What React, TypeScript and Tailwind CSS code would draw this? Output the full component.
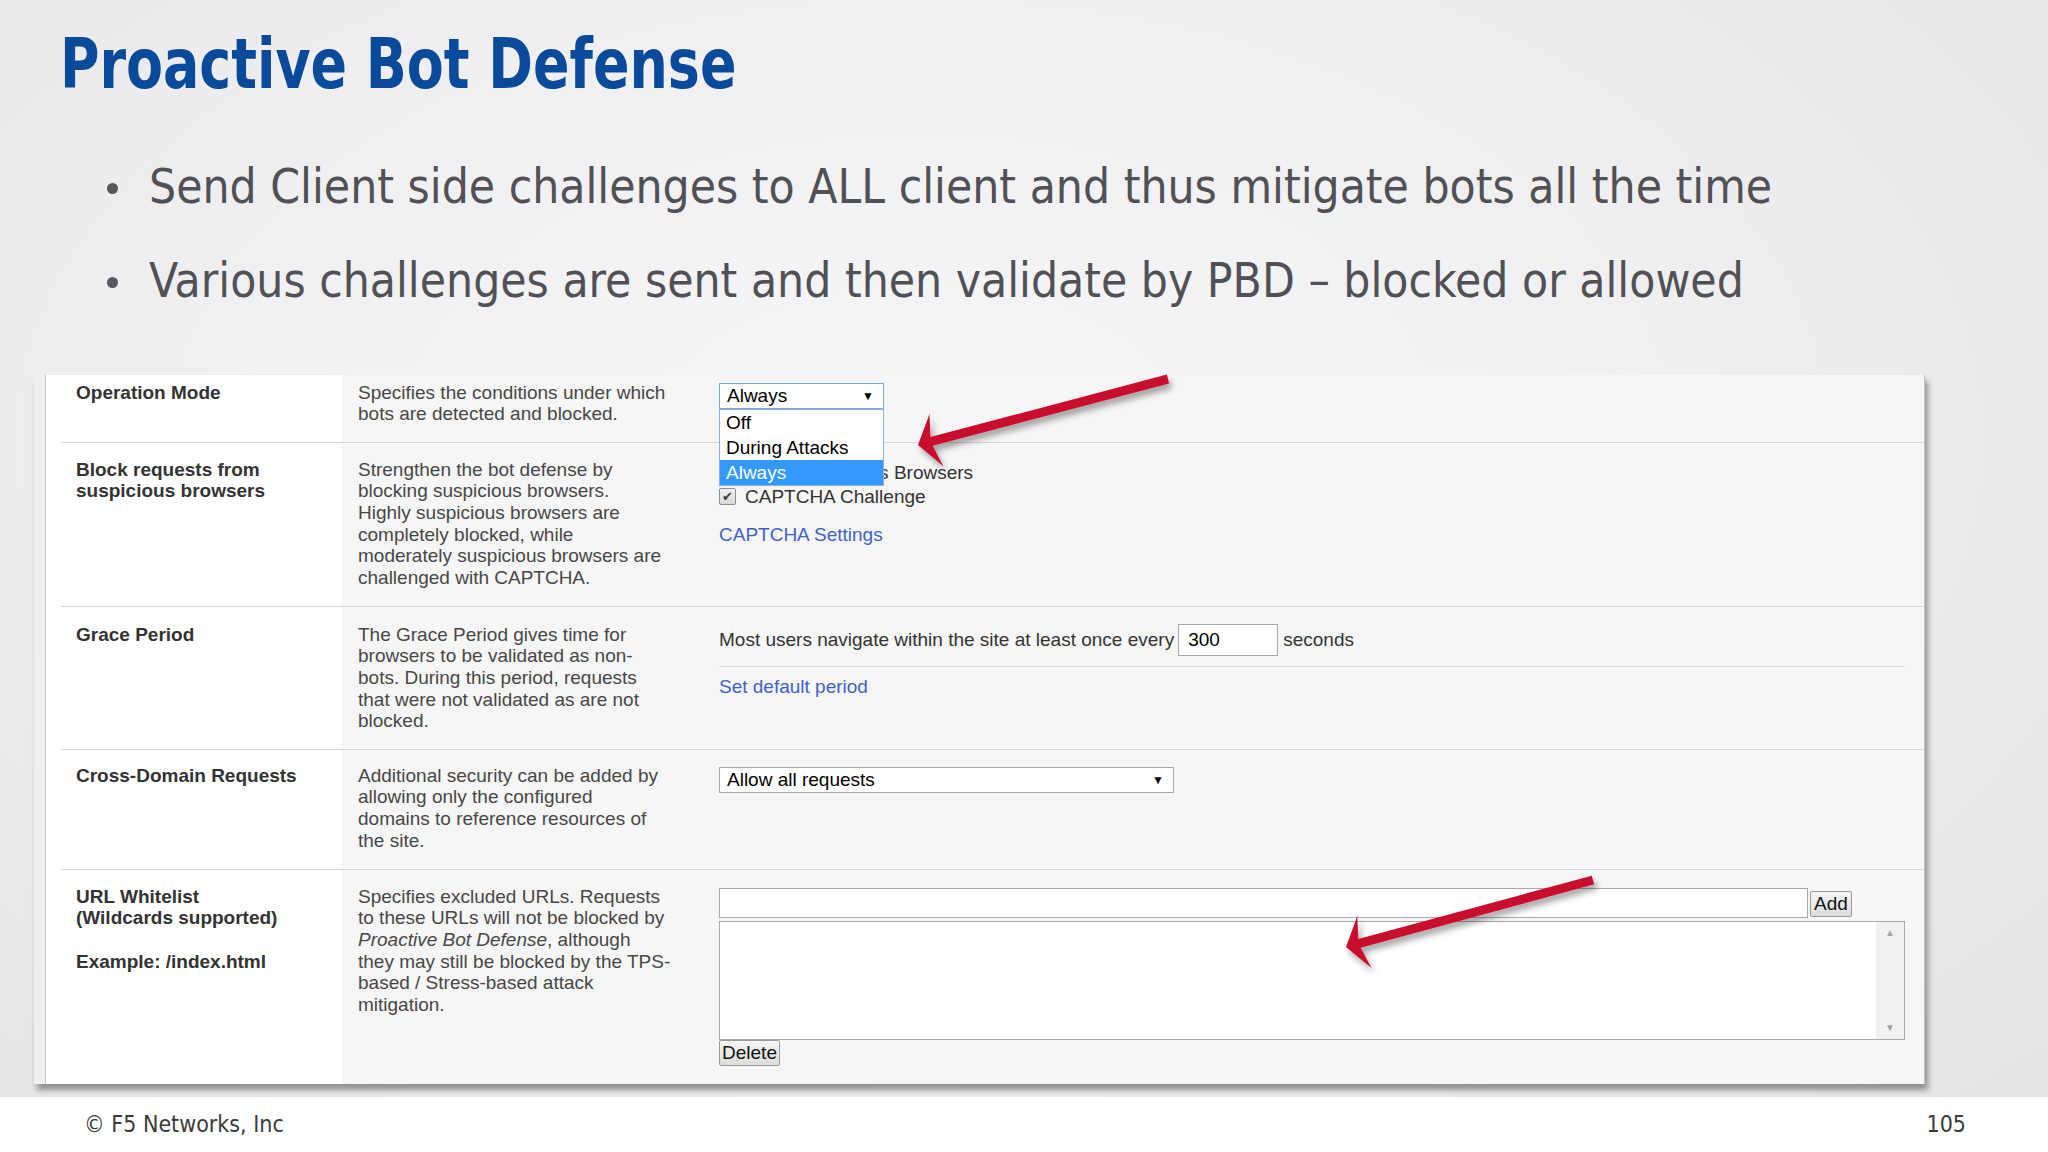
import React from "react";

const NARROW =
  "[font-family:'DejaVu_Sans_Condensed','Liberation_Sans_Narrow','Liberation_Sans',sans-serif]";
const ARIAL = "[font-family:'Liberation_Sans',Arial,sans-serif]";

function arrowPoints(tx: number, ty: number, px: number, py: number): string {
  const shaft = 9;
  const headLen = 19;
  const headW = 27;
  const notch = 14;
  const dx = px - tx;
  const dy = py - ty;
  const len = Math.hypot(dx, dy);
  const ux = dx / len;
  const uy = dy / len;
  const nx = -uy;
  const ny = ux;
  const pt = (a: number, b: number) => [px - ux * a + nx * b, py - uy * a + ny * b];
  const pts = [
    pt(0, 0),
    pt(headLen, headW),
    pt(notch, shaft / 2),
    [tx + nx * (shaft / 2), ty + ny * (shaft / 2)],
    [tx - nx * (shaft / 2), ty - ny * (shaft / 2)],
    pt(notch, -shaft / 2),
    pt(headLen, -headW),
  ];
  return pts.map((p) => `${p[0].toFixed(1)},${p[1].toFixed(1)}`).join(" ");
}

function Checkbox() {
  return (
    <span className="w-[17px] h-[17px] border border-[#8e8e8e] rounded-[2px] bg-gradient-to-b from-[#f0f0f0] to-[#d9d9d9] flex items-center justify-center text-[13px] leading-none text-[#3a3a3a]">
      ✔
    </span>
  );
}

type RowProps = {
  h: string;
  pt: string;
  label: React.ReactNode;
  desc: React.ReactNode;
  children: React.ReactNode;
  last?: boolean;
};

function Row({ h, pt, label, desc, children, last }: RowProps) {
  return (
    <div className={`flex box-border ${h} ${last ? "" : "border-b border-[#d6d4d4]"}`}>
      <div className={`w-[281px] bg-white pl-[15px] ${pt} text-[19px] leading-[21.7px] font-bold text-[#333333] whitespace-nowrap`}>
        {label}
      </div>
      <div className={`w-[362px] bg-[#f7f6f6] pl-[16px] ${pt} text-[19px] leading-[21.7px] text-[#474747] whitespace-nowrap`}>
        {desc}
      </div>
      <div className="flex-1 bg-[#f7f6f6] pl-[15px] relative text-[19px] text-[#333333]">{children}</div>
    </div>
  );
}

export default function App() {
  return (
    <div className={`relative w-[2048px] h-[1152px] overflow-hidden flex flex-col bg-white ${ARIAL}`}>
      <div className="h-[1097px] flex flex-col bg-[radial-gradient(ellipse_at_45%_40%,#f6f6f8_0%,#f0f0f2_45%,#e4e4e7_100%)]">
        <h1
          className={`${NARROW} ml-[60px] mt-[29px] text-[70px] leading-none font-bold text-[#0a4a9a] whitespace-nowrap origin-left scale-x-[0.855]`}
        >
          Proactive Bot Defense
        </h1>
        <ul className={`${NARROW} ml-[107px] mt-[64px] flex flex-col gap-[46.5px] text-[47.5px] leading-none text-[#505055]`}>
          <li className="flex items-center h-[47.5px] whitespace-nowrap">
            <span className="w-[11px] h-[11px] rounded-full bg-[#58585c] mr-[31px] mt-[4px]" />
            Send Client side challenges to ALL client and thus mitigate bots all the time
          </li>
          <li className="flex items-center h-[47.5px] whitespace-nowrap">
            <span className="w-[11px] h-[11px] rounded-full bg-[#58585c] mr-[31px] mt-[4px]" />
            Various challenges are sent and then validate by PBD – blocked or allowed
          </li>
        </ul>

        <div className="ml-[34px] mt-[70px] w-[1891px] h-[709px] flex bg-[#f7f6f6] border-r border-[#c4c4c4] shadow-[3px_6px_6px_rgba(0,0,0,0.38)]">
          <div className="w-[12px] bg-[#efefef] border-r border-[#c3c3c3]" />
          <div className="flex-1 flex flex-col bg-white pl-[15px]">
            <Row
              h="h-[68px]"
              pt="pt-[7px]"
              label="Operation Mode"
              desc={
                <>
                  Specifies the conditions under which
                  <br />
                  bots are detected and blocked.
                </>
              }
            >
              <div className="pt-[8px]">
                <div className="w-[165px] h-[26px] border border-[#7aa7dc] bg-white flex items-center justify-between pl-[7px] pr-[9px] text-black">
                  <span className="leading-none">Always</span>
                  <span className="text-[12px] leading-none">▼</span>
                </div>
              </div>
              <div className="absolute left-[15px] top-[34px] w-[165px] z-10 bg-white border border-[#8fb0d8] flex flex-col text-black">
                <div className="h-[25px] pl-[6px] flex items-center leading-none">Off</div>
                <div className="h-[25px] pl-[6px] flex items-center leading-none">During Attacks</div>
                <div className="h-[25px] pl-[6px] flex items-center leading-none bg-[#3399ff] text-white">Always</div>
              </div>
            </Row>

            <Row
              h="h-[164px]"
              pt="pt-[16px]"
              label={
                <>
                  Block requests from
                  <br />
                  suspicious browsers
                </>
              }
              desc={
                <>
                  Strengthen the bot defense by
                  <br />
                  blocking suspicious browsers.
                  <br />
                  Highly suspicious browsers are
                  <br />
                  completely blocked, while
                  <br />
                  moderately suspicious browsers are
                  <br />
                  challenged with CAPTCHA.
                </>
              }
            >
              <div className="pt-[18px] flex flex-col">
                <div className="h-[24px] flex items-center gap-[9px]">
                  <Checkbox />
                  <span className="leading-none">Block Suspicious Browsers</span>
                </div>
                <div className="h-[24px] flex items-center gap-[9px]">
                  <Checkbox />
                  <span className="leading-none">CAPTCHA Challenge</span>
                </div>
                <div className="mt-[15px] leading-[22px] text-[#3f62c8]">CAPTCHA Settings</div>
              </div>
            </Row>

            <Row
              h="h-[143px]"
              pt="pt-[17px]"
              label="Grace Period"
              desc={
                <>
                  The Grace Period gives time for
                  <br />
                  browsers to be validated as non-
                  <br />
                  bots. During this period, requests
                  <br />
                  that were not validated as are not
                  <br />
                  blocked.
                </>
              }
            >
              <div className="pt-[17px] flex flex-col">
                <div className="h-[32px] flex items-center whitespace-nowrap">
                  <span className="leading-none">Most users navigate within the site at least once every</span>
                  <div className="ml-[4px] w-[100px] h-[32px] border border-[#a9a9a9] bg-white pl-[9px] flex items-center text-black leading-none">
                    300
                  </div>
                  <span className="ml-[5px] leading-none">seconds</span>
                </div>
                <div className="mt-[10px] w-[1186px] border-t border-[#d8d6d6]" />
                <div className="mt-[9px] leading-[22px] text-[#3f62c8]">Set default period</div>
              </div>
            </Row>

            <Row
              h="h-[120px]"
              pt="pt-[15px]"
              label="Cross-Domain Requests"
              desc={
                <>
                  Additional security can be added by
                  <br />
                  allowing only the configured
                  <br />
                  domains to reference resources of
                  <br />
                  the site.
                </>
              }
            >
              <div className="pt-[17px]">
                <div className="w-[455px] h-[26px] border border-[#a9a9a9] bg-white flex items-center justify-between pl-[7px] pr-[9px] text-black">
                  <span className="leading-none">Allow all requests</span>
                  <span className="text-[12px] leading-none">▼</span>
                </div>
              </div>
            </Row>

            <Row
              h="h-[214px]"
              pt="pt-[16px]"
              last
              label={
                <>
                  URL Whitelist
                  <br />
                  (Wildcards supported)
                  <br />
                  <br />
                  Example: /index.html
                </>
              }
              desc={
                <>
                  Specifies excluded URLs. Requests
                  <br />
                  to these URLs will not be blocked by
                  <br />
                  <i>Proactive Bot Defense</i>, although
                  <br />
                  they may still be blocked by the TPS-
                  <br />
                  based / Stress-based attack
                  <br />
                  mitigation.
                </>
              }
            >
              <div className="pt-[18px] flex flex-col">
                <div className="flex items-start">
                  <div className="w-[1089px] h-[30px] border border-[#a9a9a9] bg-white" />
                  <div className="ml-[2px] mt-[3px] w-[42px] h-[26px] border border-[#9a9a9a] rounded-[2px] bg-gradient-to-b from-[#f6f6f6] to-[#dcdcdc] flex items-center justify-center leading-none text-[#111111]">
                    Add
                  </div>
                </div>
                <div className="mt-[3px] w-[1186px] h-[119px] border border-[#a9a9a9] bg-white flex justify-end">
                  <div className="w-[28px] bg-[#f1f1f1] flex flex-col items-center justify-between py-[6px] text-[10px] leading-none text-[#a3a3a3]">
                    <span>▲</span>
                    <span>▼</span>
                  </div>
                </div>
                <div className="w-[61px] h-[26px] border border-[#9a9a9a] rounded-[2px] bg-gradient-to-b from-[#f6f6f6] to-[#dcdcdc] flex items-center justify-center leading-none text-[#111111]">
                  Delete
                </div>
              </div>
            </Row>
          </div>
        </div>
      </div>

      <div className={`${NARROW} h-[55px] bg-white flex items-center justify-between pl-[84px] pr-[82px] text-[23px] leading-none text-[#3a3a3a]`}>
        <span>© F5 Networks, Inc</span>
        <span>105</span>
      </div>

      <svg
        className="absolute left-0 top-0 w-[2048px] h-[1152px] pointer-events-none z-20"
        viewBox="0 0 2048 1152"
      >
        <defs>
          <filter id="arrowShadow" x="-20%" y="-40%" width="140%" height="180%">
            <feDropShadow dx="3" dy="5" stdDeviation="3" floodColor="#000000" floodOpacity="0.35" />
          </filter>
        </defs>
        <polygon points={arrowPoints(1168, 379, 918, 445)} fill="#c8102e" filter="url(#arrowShadow)" />
        <polygon points={arrowPoints(1593, 880, 1346, 947)} fill="#c8102e" filter="url(#arrowShadow)" />
      </svg>
    </div>
  );
}
